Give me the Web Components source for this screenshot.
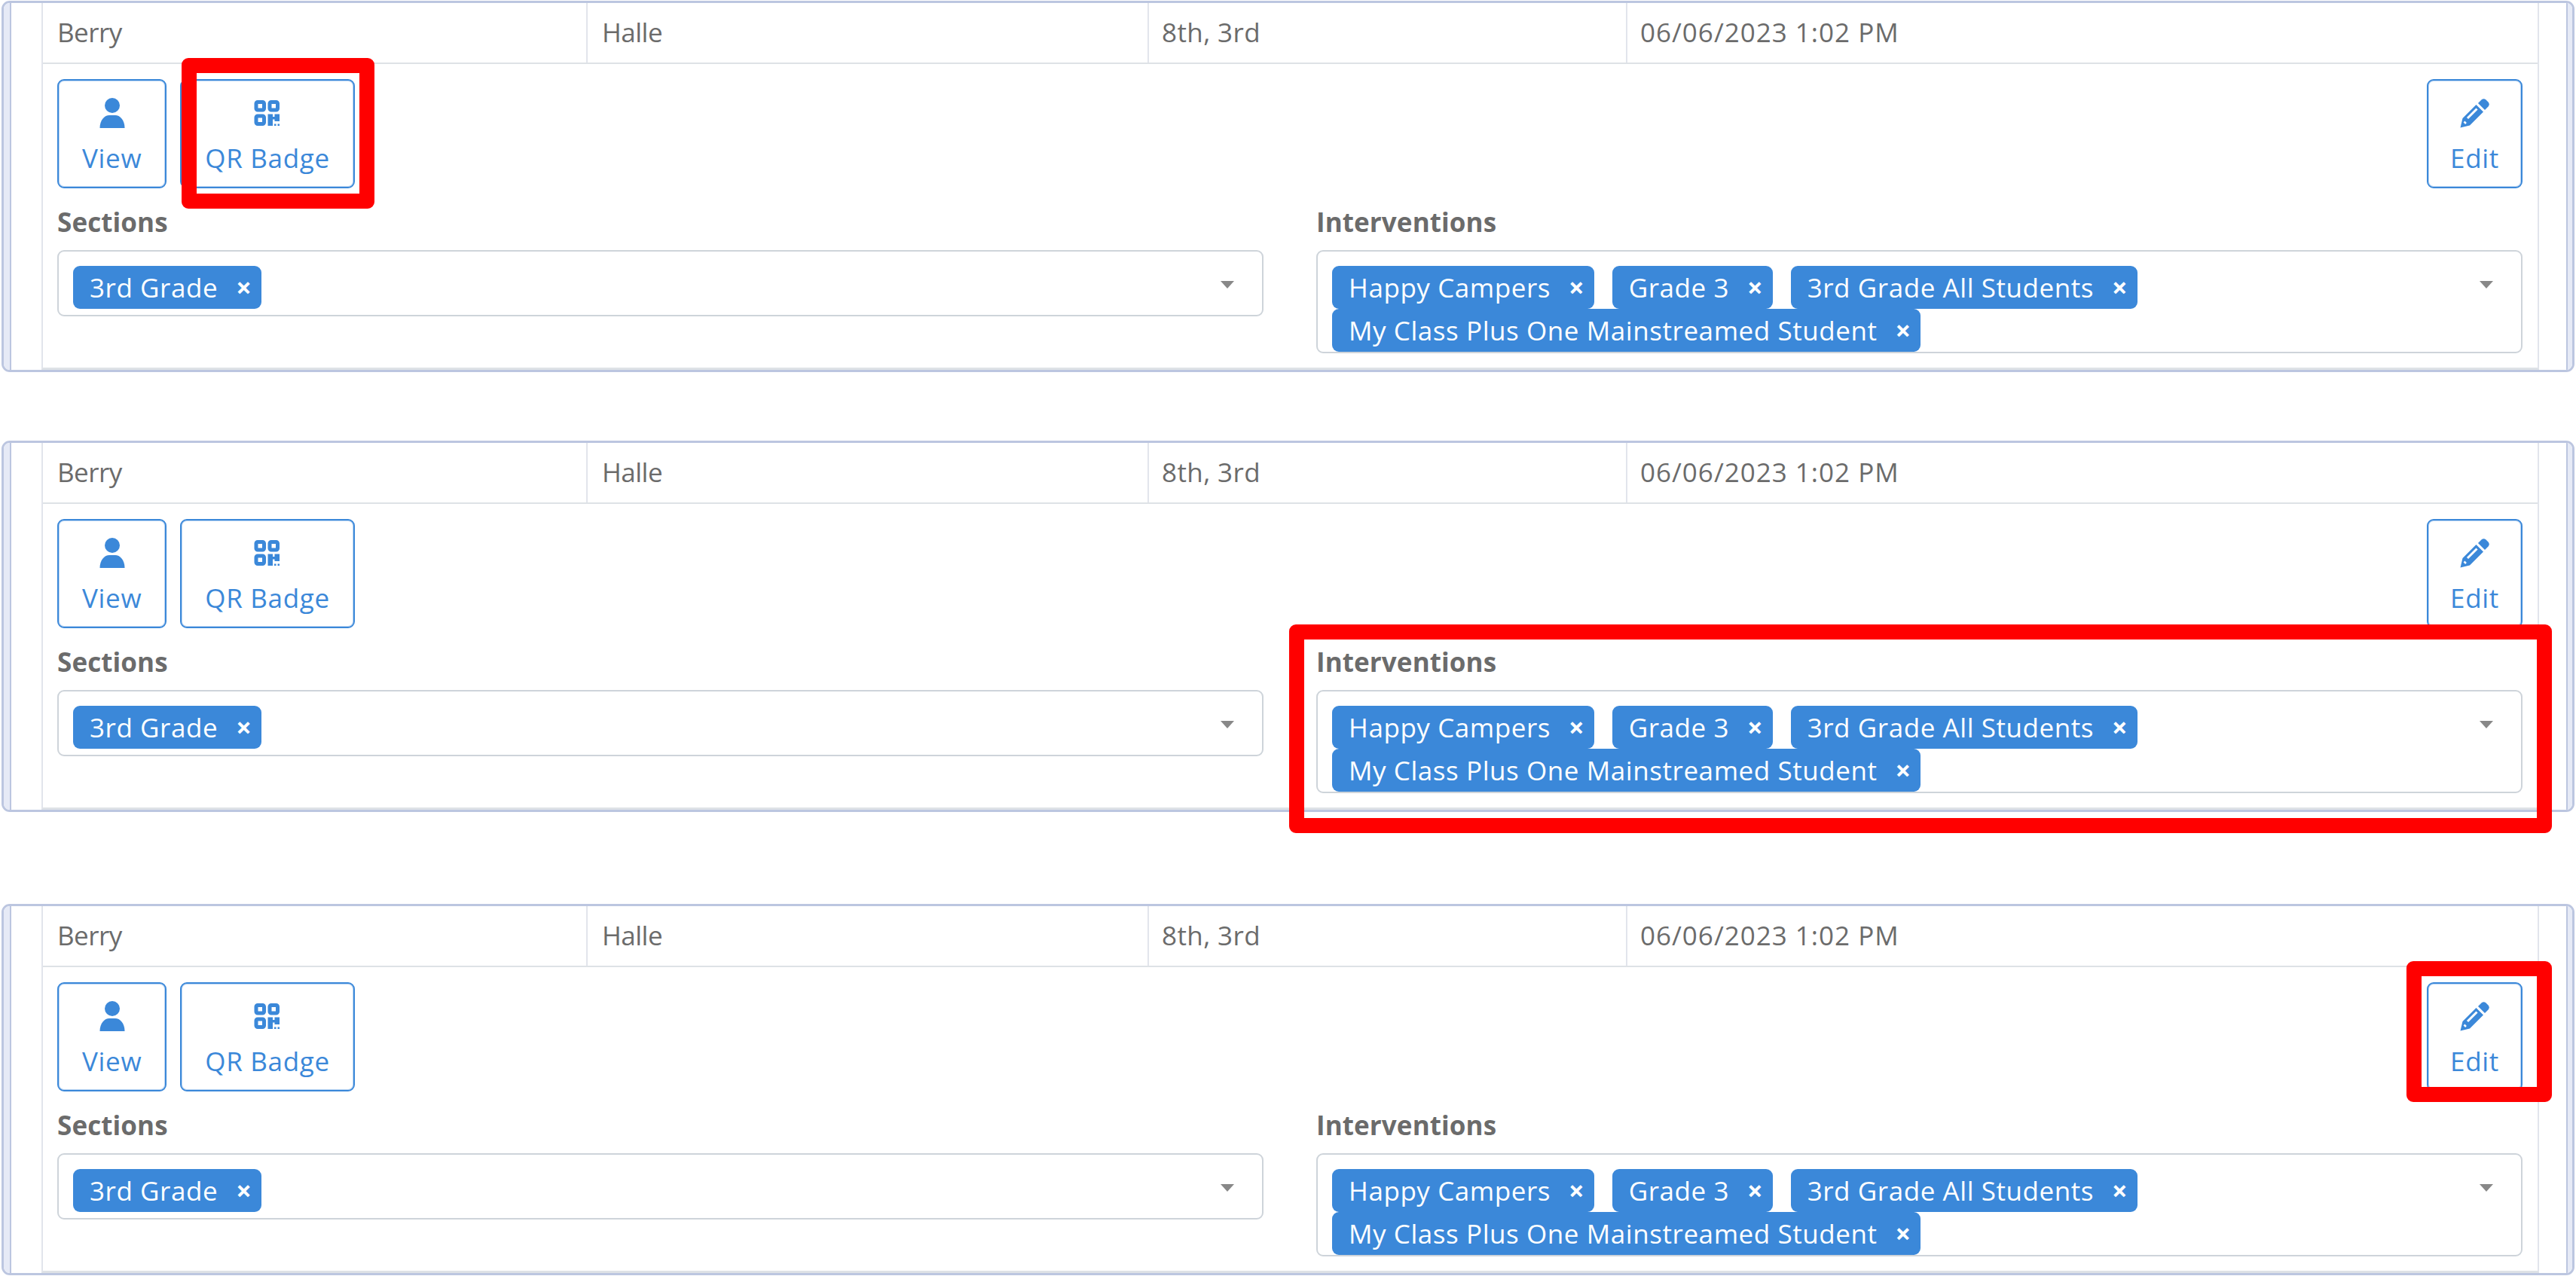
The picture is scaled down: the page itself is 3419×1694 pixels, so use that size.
<!DOCTYPE html>
<html lang="en">
<head>
<meta charset="utf-8">
<title>Students</title>
<style>
   html, body { margin: 0; padding: 0; background: white; overflow: hidden; }
   body {
      position: relative;
      height: 1694px;
      padding-top: 1px;
      box-sizing: border-box;
      font-family: "Open Sans", sans-serif;
      font-size: 35px;
      letter-spacing: 0.4px;
      color: #6b6b6b;
   }
   student-card.second { margin-top: 91px; }
   student-card.third { margin-top: 122px; }
</style>
</head>
<body>
<student-card last="Berry" first="Halle" grades="8th, 3rd" updated="06/06/2023 1:02 PM"></student-card>
<student-card class="second" last="Berry" first="Halle" grades="8th, 3rd" updated="06/06/2023 1:02 PM"></student-card>
<student-card class="third" last="Berry" first="Halle" grades="8th, 3rd" updated="06/06/2023 1:02 PM"></student-card>

<red-box style="left:241px;top:77px;width:256px;height:200px"></red-box>
<red-box style="left:1711px;top:829px;width:1676px;height:277px"></red-box>
<red-box style="left:3194px;top:1276px;width:193px;height:187px"></red-box>

<script>
const icons = {
   person: `<svg width="40" height="40" viewBox="0 0 40 40">
      <circle cx="20" cy="10" r="10" fill="currentColor"/>
      <path d="M3.5 40 C3.5 29 10 23 16 23 H24 C30 23 36.5 29 36.5 40 Z" fill="currentColor"/>
   </svg>`,
   qr: `<svg width="40" height="40" viewBox="0 0 40 40">
      <g fill="none" stroke="currentColor" stroke-width="5">
         <rect x="5" y="5.5" width="10.500" height="10.500" rx="2"/>
         <rect x="23" y="5.500" width="10.500" height="10.500" rx="2"/>
         <rect x="5" y="24" width="10.500" height="10.500" rx="2"/>
      </g>
      <path d="M20.500 21.500 H27 V25 H29.500 V21.500 H36 V31 H29.500 V28.500 H27 V37 H20.500 Z" fill="currentColor"/>
      <rect x="29" y="34.500" width="2.500" height="2.500" fill="currentColor"/>
      <rect x="33.500" y="34.500" width="2.500" height="2.500" fill="currentColor"/>
   </svg>`,
   pencil: `<svg width="40" height="40" viewBox="0 0 40 40">
      <path d="M0.500 39.500 L3.500 27 L21.500 9 L31 18.500 L13 36.500 Z" fill="currentColor"/>
      <path d="M24 7 L28.500 2.500 Q31.500 0 34.500 2.500 L37.500 5.500 Q40 8.500 37.500 11.500 L33 16 Z" fill="currentColor"/>
      <path d="M10 27 L22.500 14.500" stroke="white" stroke-width="3" fill="none"/>
      <path d="M5.500 31.500 L8 34" stroke="white" stroke-width="2.500" fill="none"/>
   </svg>`
};

class ActionButton extends HTMLElement {
   constructor() {
      super();
      this.attachShadow({ mode: 'open' });
      this.shadowRoot.innerHTML = `
         <style>
            :host {
               display: flex;
               flex-direction: column;
               align-items: center;
               box-sizing: border-box;
               height: 145px;
               padding: 23px 31px 0;
               border: 2px solid #3b88d9;
               border-radius: 9px;
               box-shadow: inset 0 0 0 1px rgba(59, 136, 217, 0.35);
               color: #3b88d9;
               letter-spacing: 0.7px;
            }
            svg { display: block; }
            span { line-height: 46px; margin-top: 17px; white-space: nowrap; }
         </style>
         ${icons[this.getAttribute('icon')]}
         <span><slot></slot></span>`;
   }
}
customElements.define('action-button', ActionButton);

class TagChip extends HTMLElement {
   constructor() {
      super();
      this.attachShadow({ mode: 'open' });
      this.shadowRoot.innerHTML = `
         <style>
            :host {
               display: inline-flex;
               align-items: center;
               box-sizing: border-box;
               height: 57px;
               padding: 0 13px 0 22px;
               border-radius: 9px;
               background-color: #3b88d9;
               color: white;
               letter-spacing: 0.57px;
               white-space: nowrap;
            }
            b { margin-left: 24px; font-size: 36px; line-height: 1; letter-spacing: 0; }
         </style>
         <slot></slot><b>×</b>`;
   }
}
customElements.define('tag-chip', TagChip);

class TagSelect extends HTMLElement {
   constructor() {
      super();
      this.attachShadow({ mode: 'open' });
      this.shadowRoot.innerHTML = `
         <style>
            :host { display: block; }
            label { display: block; font-weight: 700; letter-spacing: 0.1px; line-height: 40px; margin-bottom: 17px; }
            #box {
               position: relative;
               box-sizing: border-box;
               min-height: 88px;
               padding: 19px 70px 0 19px;
               border: 2px solid #ced4da;
               border-radius: 9px;
               display: flex;
               flex-wrap: wrap;
               column-gap: 24px;
               align-content: flex-start;
            }
            i {
               position: absolute;
               top: 39px;
               right: 37px;
               border: 9px solid transparent;
               border-top: 10px solid #888;
               border-bottom: 0;
            }
         </style>
         <label>${this.getAttribute('label')}</label>
         <div id="box"><slot></slot><i></i></div>`;
   }
}
customElements.define('tag-select', TagSelect);

class StudentCard extends HTMLElement {
   constructor() {
      super();
      this.attachShadow({ mode: 'open' });
      const cells = ['last', 'first', 'grades', 'updated']
         .map(name => `<div class="cell">${this.getAttribute(name)}</div>`).join('');
      this.shadowRoot.innerHTML = `
         <style>
            :host {
               display: flex;
               box-sizing: border-box;
               height: 493px;
               margin: 0 2px;
               border: 3px solid #bcc6e0;
               border-radius: 11px;
               overflow: hidden;
            }
            .rail { flex: none; box-sizing: border-box; width: 10px; background-color: #e6eaf6; }
            .rail.left { border-right: 2px solid #bcc6e0; }
            .rail.right { width: 8px; border-left: 2px solid #bcc6e0; }
            .gutter { flex: none; }
            .gutter.left { width: 40px; }
            .gutter.right { width: 36px; }
            main {
               flex: 1;
               min-width: 0;
               border-left: 2px solid #e2e5ec;
               border-right: 2px solid #e2e5ec;
               border-bottom: 3px solid #dee2e6;
            }
            .row {
               display: grid;
               grid-template-columns: 723px 745px 635px 1fr;
               height: 81px;
               box-sizing: border-box;
               border-bottom: 2px solid #dee2e6;
            }
            .cell {
               display: flex;
               align-items: center;
               padding: 0 0 2px 19px;
               border-right: 2px solid #e2e5ec;
               letter-spacing: -0.5px;
            }
            .cell:nth-child(3) { padding-left: 17px; letter-spacing: 0.4px; }
            .cell:last-child { padding-left: 17px; border-right: 0; letter-spacing: 1px; }
            .body { padding: 20px 20px 0 19px; }
            .tools { display: flex; gap: 18px; }
            .tools action-button:last-child { margin-left: auto; padding-left: 29px; padding-right: 29px; }
            .fields {
               display: grid;
               grid-template-columns: 1fr 1fr;
               column-gap: 70px;
               margin-top: 25px;
            }
         </style>
         <div class="rail left"></div>
         <div class="gutter left"></div>
         <main>
            <div class="row">${cells}</div>
            <div class="body">
               <div class="tools">
                  <action-button icon="person">View</action-button>
                  <action-button icon="qr">QR Badge</action-button>
                  <action-button icon="pencil">Edit</action-button>
               </div>
               <div class="fields">
                  <tag-select label="Sections">
                     <tag-chip>3rd Grade</tag-chip>
                  </tag-select>
                  <tag-select label="Interventions">
                     <tag-chip>Happy Campers</tag-chip>
                     <tag-chip>Grade 3</tag-chip>
                     <tag-chip>3rd Grade All Students</tag-chip>
                     <tag-chip>My Class Plus One Mainstreamed Student</tag-chip>
                  </tag-select>
               </div>
            </div>
         </main>
         <div class="gutter right"></div>
         <div class="rail right"></div>`;
   }
}
customElements.define('student-card', StudentCard);

class RedBox extends HTMLElement {
   constructor() {
      super();
      this.attachShadow({ mode: 'open' });
      this.shadowRoot.innerHTML = `
         <style>
            :host {
               position: absolute;
               box-sizing: border-box;
               border: 20px solid #ff0000;
               border-radius: 9px;
            }
         </style>`;
   }
}
customElements.define('red-box', RedBox);
</script>
</body>
</html>
